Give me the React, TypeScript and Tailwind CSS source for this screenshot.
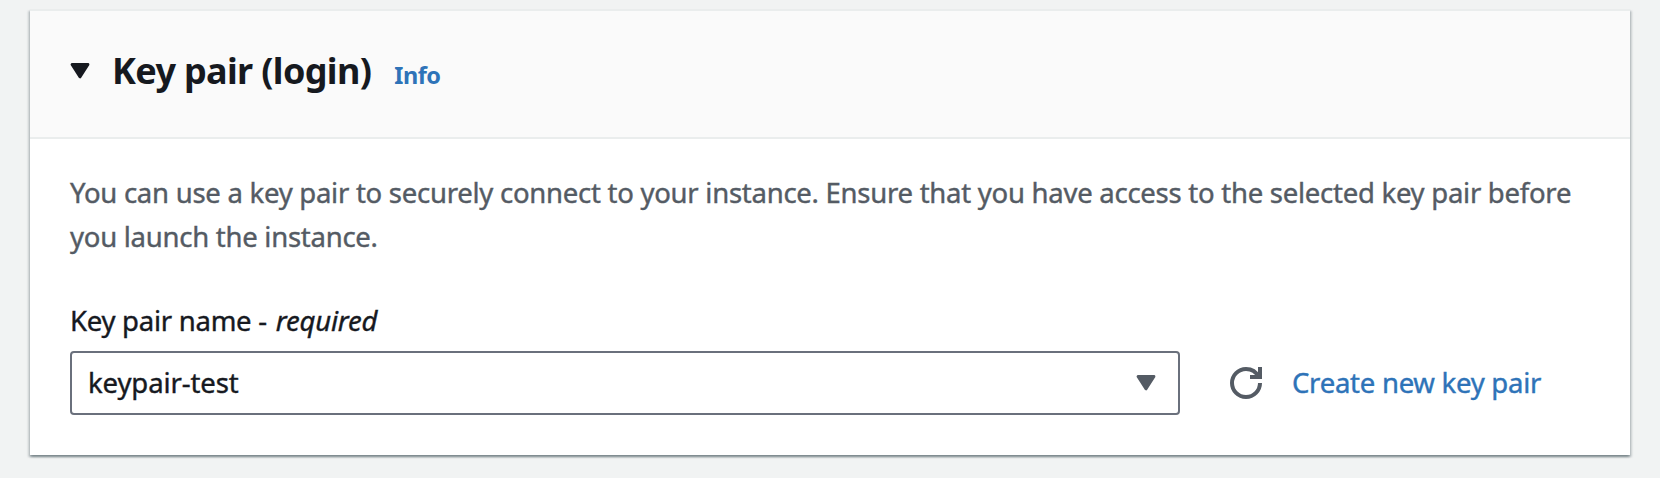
function CaretDown({ className }: { className: string }) {
  return (
    <svg viewBox="0 0 20 16" className={`h-4 w-5 shrink-0 ${className}`} aria-hidden="true">
      <path d="M1.5 1.5H18.5L10 14.5Z" fill="currentColor" stroke="currentColor" strokeWidth="3" strokeLinejoin="round" transform="translate(0.6 0.1) scale(0.94 0.95)" />
    </svg>
  );
}

function RefreshIcon() {
  return (
    <svg viewBox="0 0 32 32" className="size-8" fill="none" stroke="currentColor" strokeWidth="4" aria-hidden="true">
      <path d="M30 16A14 14 0 1 1 16 2C21.6 2 26.4 5.2 28.6 10" />
      <path d="M20 10H30V0" />
    </svg>
  );
}

export default function App() {
  return (
    <div className="h-[478px] w-[1660px] overflow-hidden bg-[#f1f3f3] pl-[30px] pt-[9px] font-['Noto_Sans','Open_Sans',sans-serif] text-[27.5px] leading-[44px] tracking-[-0.26px] text-[#16191f] [-webkit-text-stroke:0.4px_currentColor]">
      <section className="w-[1600px] border-t-2 border-[#eaeded] bg-white shadow-[0_2px_2px_0_rgba(0,28,36,0.3),2px_2px_2px_0_rgba(0,28,36,0.15),-2px_2px_2px_0_rgba(0,28,36,0.15)]">
        <header className="flex h-32 items-start border-b-2 border-[#eaeded] bg-[#fafafa] pl-10 pt-[38px]">
          <CaretDown className="mt-3.5" />
          <h2 className="ml-[22px] text-[36px] font-bold tracking-[-0.65px] [-webkit-text-stroke:0]">Key pair (login)</h2>
          <a href="#" className="ml-[23px] pt-1 text-[23.5px] font-bold tracking-[-0.5px] text-[#2e73b8] [-webkit-text-stroke:0]">Info</a>
        </header>
        <div className="px-10 pb-10 pt-8">
          <p className="text-[#545b64]">
            You can use a key pair to securely connect to your instance. Ensure that you have access to the selected key pair before you launch the instance.
          </p>
          <div className="mt-10">
            Key pair name - <em className="ml-[2px] tracking-[-0.2px]">required</em>
          </div>
          <div className="mt-2 flex items-center">
            <button type="button" className="flex h-16 w-[1110px] items-center justify-between rounded-[4px] border-2 border-[#6a707c] bg-white pl-4 pr-[22px] text-left">
              <span className="tracking-[-0.1px]">keypair-test</span>
              <CaretDown className="text-[#545b64]" />
            </button>
            <button type="button" aria-label="Refresh" className="ml-[50px] text-[#545b64]">
              <RefreshIcon />
            </button>
            <a href="#" className="ml-[30px] text-[#2e73b8]">Create new key pair</a>
          </div>
        </div>
      </section>
    </div>
  );
}
